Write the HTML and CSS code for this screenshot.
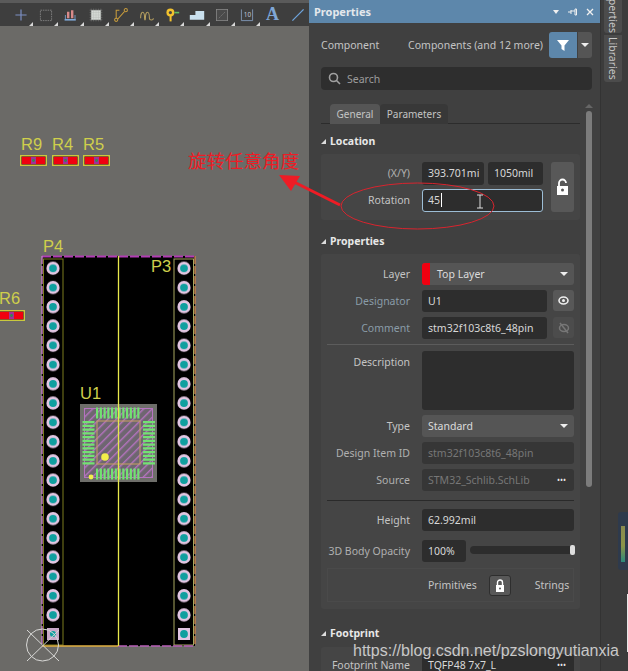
FILE: index.html
```html
<!DOCTYPE html>
<html lang="en">
<head>
    <meta charset="UTF-8">
    <meta name="viewport" content="width=device-width, initial-scale=1.0">
    <title>Properties</title>
    <link rel="stylesheet" href="styles.css">
</head>
<body>
    <div class="app">
        <!-- pcb canvas -->
        <div class="canvas">
            <svg class="board" width="309" height="671" viewBox="0 0 309 671">
                <defs>
                    <g id="pad">
                        <circle r="6.600" fill="#e2c6e2"/>
                        <circle r="3.900" fill="#0f9f9f"/>
                    </g>
                    <!-- pattern width is the distance between the two pin columns -->
                    <pattern id="pads" x="43" y="258.700" width="131" height="19.260" patternUnits="userSpaceOnUse">
                        <use href="#pad" x="10" y="9.600"/>
                    </pattern>
                    <pattern id="hatch" width="6" height="6" patternUnits="userSpaceOnUse" patternTransform="rotate(45)">
                        <rect width="6" height="6" fill="#6e6670"/>
                        <rect width="1.400" height="6" fill="#b673c0"/>
                    </pattern>
                    <g id="res">
                        <rect x="0.700" y="0.700" width="25.600" height="9.600" fill="#5a1020" stroke="#c9c93e" stroke-width="1.400"/>
                        <rect x="2" y="2" width="9" height="7" fill="#f00010"/>
                        <rect x="16" y="2" width="9" height="7" fill="#f00010"/>
                        <rect x="11" y="2" width="5" height="7" fill="#a0309a"/>
                        <circle cx="13.500" cy="5.500" r="1.400" fill="#2f8f4a"/>
                    </g>
                </defs>

                <text class="ref" x="21" y="150">R9</text>
                <text class="ref" x="52" y="150">R4</text>
                <text class="ref" x="83" y="150">R5</text>
                <use href="#res" x="20" y="155"/>
                <use href="#res" x="52" y="155"/>
                <use href="#res" x="83" y="155"/>
                <text class="ref" x="-1" y="304">R6</text>
                <use href="#res" x="-2" y="310"/>

                <text class="ref" x="43" y="252">P4</text>

                <!-- outline -->
                <rect x="42" y="256" width="153" height="390" fill="#000"/>
                <rect x="43.500" y="259" width="19.500" height="386" fill="none" stroke="#7c7c1e"/>
                <rect x="174" y="259" width="19.500" height="386" fill="none" stroke="#a8a860"/>
                <line x1="42" y1="256.500" x2="195" y2="256.500" stroke="#b23db4" stroke-width="2" stroke-dasharray="9 2"/>
                <line x1="42" y1="256" x2="42" y2="646" stroke="#c47cc4" stroke-width="1.400" stroke-dasharray="8 2"/>
                <line x1="195" y1="256" x2="195" y2="646" stroke="#c8824e" stroke-width="1.400" stroke-dasharray="8 2"/>
                <line x1="42" y1="646" x2="118" y2="646" stroke="#e0b040" stroke-width="1.400"/>
                <line x1="118" y1="646" x2="195" y2="646" stroke="#b860b8" stroke-width="1.400" stroke-dasharray="9 2"/>

                <rect x="43" y="259" width="151" height="366" fill="url(#pads)"/>
                <rect x="47" y="628" width="12" height="12" fill="#c8a8c8"/>
                <circle cx="53" cy="634" r="3" fill="#0f9f9f"/>
                <rect x="178" y="628" width="12" height="12" fill="#e2c6e2"/>
                <circle cx="184" cy="634" r="3.900" fill="#0f9f9f"/>

                <text class="ref" x="151" y="272">P3</text>

                <!-- u1 -->
                <text class="ref" x="80" y="399">U1</text>
                <rect x="80" y="404" width="77" height="78" fill="#6e6e6a"/>
                <rect x="84.500" y="408.500" width="68" height="69" fill="url(#hatch)" stroke="#b673c0"/>
                <rect x="97" y="421" width="43" height="43" fill="url(#hatch)" stroke="#c8a060"/>
                <g stroke="#72e272" fill="none">
                    <line x1="96" y1="413" x2="141" y2="413" stroke-width="11" stroke-dasharray="2.200 1.550"/>
                    <line x1="96" y1="474" x2="141" y2="474" stroke-width="11" stroke-dasharray="2.200 1.550"/>
                    <line x1="88.500" y1="421" x2="88.500" y2="466" stroke-width="12" stroke-dasharray="2.200 1.550"/>
                    <line x1="149" y1="421" x2="149" y2="466" stroke-width="12" stroke-dasharray="2.200 1.550"/>
                </g>
                <circle cx="105" cy="457" r="3.800" fill="#f2ee4a"/>
                <circle cx="91" cy="477" r="2.400" fill="#f2ee4a"/>
                <line x1="118.500" y1="256" x2="118.500" y2="646" stroke="#e8e84c" stroke-width="1.300"/>

                <!-- origin -->
                <g fill="none" stroke="#d8d8d6" stroke-width="1">
                    <circle cx="42.500" cy="645" r="16"/>
                    <path d="M27 630l32 31M59 630l-32 31"/>
                </g>
            </svg>

            <div class="toolbar">
                <div class="tool"><svg viewBox="0 0 20 20"><path d="M10 3v14M3 10h14" stroke="#7c8fc4" stroke-width="1.500"/></svg></div>
                <div class="tool"><svg viewBox="0 0 20 20"><rect x="3" y="4" width="14" height="13" fill="none" stroke="#8a8a8a" stroke-dasharray="2 1"/></svg></div>
                <div class="tool"><svg viewBox="0 0 20 20"><path d="M5 6h3v8h-3zM10 4h3v10h-3z" fill="#d98a8a"/><path d="M2 15h14v2h-14z" fill="#7fa8d8"/><path d="M3 10v5M15 10v5" stroke="#7fa8d8"/></svg></div>
                <div class="tool"><svg viewBox="0 0 20 20"><rect x="4" y="4" width="12" height="12" fill="#d8dcd8"/><path d="M4 2v16M7 2v16M10 2v16M13 2v16M16 2v16M2 4h16M2 7h16M2 10h16M2 13h16M2 16h16" stroke="#a8aca8" stroke-width="0.600" opacity="0.700"/></svg></div>
                <div class="tool"><svg viewBox="0 0 20 20" fill="none" stroke="#c89c3c" stroke-width="1.300"><circle cx="4" cy="16" r="2"/><circle cx="16" cy="4" r="2"/><path d="M4 14v-10h4M6 15l8-9"/></svg></div>
                <div class="tool"><svg viewBox="0 0 20 20" fill="none" stroke="#b8a060" stroke-width="1.300"><path d="M2 14c0-10 5-10 5 0c0 3 1 3 1 0c0-10 5-10 5 0c0 3 5 3 5 0"/></svg></div>
                <div class="tool"><svg viewBox="0 0 20 20"><circle cx="8" cy="7" r="5" fill="#f2c22e"/><circle cx="8" cy="7" r="2" fill="#444"/><rect x="7" y="11" width="2.500" height="7" fill="#f2c22e"/><rect x="13" y="6" width="6" height="2" fill="#62c060"/></svg></div>
                <div class="tool"><svg viewBox="0 0 20 20"><path d="M1 16v-6h7v-5h11v11z" fill="#c9e0ee"/></svg></div>
                <div class="tool"><svg viewBox="0 0 20 20"><rect x="3" y="3" width="14" height="14" fill="#4a4a4a" stroke="#888"/><path d="M6 14l8-8" stroke="#777" stroke-dasharray="3 1"/></svg></div>
                <div class="tool"><svg viewBox="0 0 20 20" fill="none" stroke="#8aa4c8"><path d="M3 3v14h14v-14"/><text class="tool-num" x="6" y="13">10</text></svg></div>
                <div class="tool tool-plain"><span class="tool-a">A</span></div>
                <div class="tool tool-plain"><svg viewBox="0 0 20 20"><path d="M3 17l14-14" stroke="#6ea4dc" stroke-width="1.600"/></svg></div>
            </div>
        </div>

        <!-- properties panel -->
        <div class="panel">
            <div class="panel__head">
                <span class="panel__title">Properties</span>
                <span class="panel__icons">
                    <svg width="8" height="8" viewBox="0 0 8 8"><path d="M1 2h6l-3 4z" fill="#f0f0f0"/></svg>
                    <svg width="10" height="8" viewBox="0 0 10 8"><path d="M0 4h3M3 3h4M7 1v6h1.500v-6zM3 2v4" stroke="#f0f0f0" fill="none"/></svg>
                    <svg width="8" height="8" viewBox="0 0 8 8"><path d="M1 1l6 6M7 1l-6 6" stroke="#f0f0f0" stroke-width="1.300"/></svg>
                </span>
            </div>

            <div class="filter">
                <span>Component</span>
                <span class="filter__name">Components (and 12 more)</span>
                <span class="filter__btn"><svg width="14" height="14" viewBox="0 0 14 14"><path d="M1 2h12l-4.500 5.500v5.500l-3-2v-3.500z" fill="#fff"/></svg></span>
                <span class="filter__more"><svg width="8" height="6" viewBox="0 0 8 6"><path d="M0 1h8l-4 4z" fill="#eee"/></svg></span>
            </div>

            <div class="search">
                <svg width="13" height="13" viewBox="0 0 13 13" fill="none" stroke="#a0a0a0" stroke-width="1.600"><circle cx="5.500" cy="5.500" r="4"/><path d="M8.500 8.500l3.500 3.500"/></svg>
                <span>Search</span>
            </div>

            <div class="panel__body">
                <div class="content">
                    <div class="tabs">
                        <span class="tab tab--active">General</span>
                        <span class="tab">Parameters</span>
                    </div>

                    <h3 class="group-title">Location</h3>
                    <div class="group group--location">
                        <div class="location-rows">
                            <div class="row">
                                <label class="lbl lbl--dim">(X/Y)</label>
                                <div class="input input--x">393.701mi</div>
                                <div class="input input--y">1050mil</div>
                            </div>
                            <div class="row">
                                <label class="lbl">Rotation</label>
                                <div class="input input--active">45<i class="caret"></i></div>
                            </div>
                        </div>
                        <div class="btn btn--lock">
                            <svg width="13" height="18" viewBox="0 0 13 18"><path d="M3 8v-3a3.500 3.500 0 0 1 7 0" fill="none" stroke="#fff" stroke-width="1.800"/><path d="M1 8h11v9h-11z" fill="#fff"/><circle cx="6.500" cy="12" r="1.500" fill="#555"/></svg>
                        </div>
                    </div>

                    <h3 class="group-title group-title--props">Properties</h3>
                    <div class="group">
                        <div class="row">
                            <label class="lbl">Layer</label>
                            <div class="select select--layer"><i class="swatch"></i>Top Layer<i class="arrow"></i></div>
                        </div>
                        <div class="row">
                            <label class="lbl lbl--link">Designator</label>
                            <div class="input input--grow">U1</div>
                            <div class="btn btn--eye"><svg width="11" height="9" viewBox="0 0 11 9"><ellipse cx="5.500" cy="4.500" rx="4.500" ry="3.500" fill="none" stroke="#eee" stroke-width="1.600"/><circle cx="5.500" cy="4.500" r="1.500" fill="#eee"/></svg></div>
                        </div>
                        <div class="row">
                            <label class="lbl lbl--link">Comment</label>
                            <div class="input input--grow">stm32f103c8t6_48pin</div>
                            <div class="btn btn--eye btn--off"><svg width="12" height="12" viewBox="0 0 12 12"><ellipse cx="6" cy="6" rx="4.500" ry="3.500" fill="none" stroke="#777" stroke-width="1.500"/><path d="M2 1l8 10" stroke="#777" stroke-width="1.500"/></svg></div>
                        </div>
                        <div class="divider"></div>
                        <div class="row row--desc">
                            <label class="lbl">Description</label>
                            <div class="input input--area"></div>
                        </div>
                        <div class="row">
                            <label class="lbl">Type</label>
                            <div class="select">Standard<i class="arrow"></i></div>
                        </div>
                        <div class="row row--item">
                            <label class="lbl lbl--dim">Design Item ID</label>
                            <div class="input input--grow input--off">stm32f103c8t6_48pin</div>
                        </div>
                        <div class="row">
                            <label class="lbl lbl--dim">Source</label>
                            <div class="input input--grow input--off input--dots">STM32_Schlib.SchLib<b class="dots">•••</b></div>
                        </div>
                        <div class="divider divider--dark"></div>
                        <div class="row">
                            <label class="lbl">Height</label>
                            <div class="input input--grow">62.992mil</div>
                        </div>
                        <div class="row row--opacity">
                            <label class="lbl lbl--dim">3D Body Opacity</label>
                            <div class="input input--pct">100%</div>
                            <div class="slider"><i class="slider__knob"></i></div>
                        </div>
                        <div class="prims">
                            <span>Primitives</span>
                            <div class="btn btn--prim"><svg width="10" height="13" viewBox="0 0 10 13"><path d="M2.500 6v-2.500a2.500 2.500 0 0 1 5 0v2.500" fill="none" stroke="#fff" stroke-width="1.400"/><path d="M1 6h8v7h-8z" fill="#fff"/><circle cx="5" cy="9.500" r="1" fill="#555"/></svg></div>
                            <span>Strings</span>
                        </div>
                    </div>

                    <h3 class="group-title group-title--foot">Footprint</h3>
                    <div class="group group--foot">
                        <div class="row">
                            <label class="lbl">Footprint Name</label>
                            <div class="input input--grow input--dots">TQFP48 7x7_L<b class="dots">•••</b></div>
                        </div>
                    </div>
                </div>
                <div class="scroll">
                    <svg width="8" height="5" viewBox="0 0 8 5"><path d="M0 4l4-4 4 4z" fill="#666"/></svg>
                    <div class="scroll__thumb"></div>
                </div>
            </div>
        </div>

        <!-- docked tabs -->
        <div class="dock">
            <div class="dock__tab dock__tab--cut"><span>Properties</span></div>
            <div class="dock__tab"><span>Libraries</span></div>
            <div class="dock__meter"></div>
            <div class="dock__edge"></div>
        </div>

        <!-- hand drawn notes on top of the screenshot -->
        <svg class="notes" width="628" height="671" viewBox="0 0 628 671">
            <ellipse cx="417.500" cy="206" rx="76.500" ry="23" fill="none" stroke="#d8242e"/>
            <path d="M340 205l-46-23" stroke="#ee1c25" stroke-width="3"/>
            <path d="M279 175l21 1-9 15z" fill="#ee1c25"/>
            <path d="M477 195h6M480 195v13M477 208h6" stroke="#ddd" fill="none"/>
        </svg>
        <div class="note-text">旋转任意角度</div>
        <div class="watermark">https://blog.csdn.net/pzslongyutianxia</div>
    </div>
</body>
</html>
```

FILE: styles.css
```css
* {
    margin: 0;
    box-sizing: border-box;
}

body {
    background: #3c3c3c;
    font-family: "Noto Sans", "Liberation Sans", sans-serif;
    font-size: 10.500px;
    color: #c4c4c4;
}

.app {
    width: 628px;
    height: 671px;
    display: flex;
    position: relative;
    overflow: hidden;
}

/* canvas */
.canvas {
    width: 309px;
    position: relative;
    background: #6b6a67;
    flex-shrink: 0;
}
.board {
    position: absolute;
    top: 0;
    left: 0;
}
.ref {
    font-family: "Liberation Sans", sans-serif;
    font-size: 16.500px;
    fill: #cfcf4c;
}
.toolbar {
    position: relative;
    height: 26px;
    padding-left: 8px;
    background: #3e3e3e;
    border-top: 3px solid #5a5a5a;
    display: flex;
    align-items: center;
}
.tool {
    width: 25.200px;
    height: 23px;
    flex-shrink: 0;
    position: relative;
    display: flex;
    align-items: center;
    justify-content: center;
}
.tool svg {
    width: 16px;
    height: 16px;
}
.tool::after {
    content: "";
    position: absolute;
    right: 0;
    bottom: 0;
    border-style: solid;
    border-width: 0 0 4px 4px;
    border-color: transparent transparent #d8d8d8 transparent;
}
.tool-plain::after {
    display: none;
}
.tool-num {
    font-size: 8px;
    fill: #c0c8d8;
    stroke: none;
}
.tool-a {
    font-family: "Liberation Serif", serif;
    font-size: 18px;
    font-weight: bold;
    color: #7fa6d6;
}

/* panel */
.panel {
    width: 291px;
    flex-shrink: 0;
    background: #404040;
    display: flex;
    flex-direction: column;
}
.panel__head {
    height: 23px;
    padding: 0 6px 0 5px;
    background: #5d87ab;
    display: flex;
    justify-content: space-between;
    align-items: center;
}
.panel__title {
    font-size: 11px;
    font-weight: bold;
    color: #e4e8ec;
}
.panel__icons {
    display: flex;
    gap: 8px;
}
.filter {
    height: 26px;
    margin: 9px 8px 0 12px;
    display: flex;
    align-items: center;
}
.filter__name {
    margin-left: auto;
    margin-right: 6px;
}
.filter__btn {
    width: 28px;
    height: 26px;
    background: #5d87ab;
    border-radius: 3px 0 0 3px;
    display: flex;
    align-items: center;
    justify-content: center;
}
.filter__more {
    width: 14px;
    height: 26px;
    margin-left: 1px;
    background: #555;
    border-radius: 0 3px 3px 0;
    display: flex;
    align-items: center;
    justify-content: center;
}
.search {
    height: 23px;
    margin: 9px 8px 0 12px;
    padding-left: 7px;
    background: #2e2e2e;
    border-radius: 4px;
    display: flex;
    align-items: center;
    gap: 6px;
    color: #9c9c9c;
}
.panel__body {
    flex: 1;
    min-height: 0;
    margin-top: 14px;
    display: flex;
}
.content {
    width: 271px;
    flex-shrink: 0;
    padding-left: 12px;
}
.scroll {
    width: 8px;
    margin-left: 5px;
    display: flex;
    flex-direction: column;
    align-items: center;
}
.scroll__thumb {
    width: 6px;
    height: 376px;
    margin-top: 2px;
    background: #7c7c7c;
    border-radius: 3px;
}

.tabs {
    height: 20px;
    padding-left: 9px;
    border-bottom: 1px solid #2c2c2c;
    display: flex;
}
.tab {
    width: 68px;
    height: 20px;
    background: #383838;
    border-radius: 4px 4px 0 0;
    display: flex;
    align-items: center;
    justify-content: center;
    font-size: 10px;
}
.tab--active {
    width: 50px;
    background: #555;
}

.group-title {
    height: 16px;
    margin-top: 9px;
    padding-left: 9px;
    font-size: 10.500px;
    font-weight: bold;
    line-height: 16px;
    color: #e8e8e8;
    position: relative;
}
.group-title::before {
    content: "";
    position: absolute;
    left: 0;
    top: 6px;
    border-style: solid;
    border-width: 0 0 5px 5px;
    border-color: transparent transparent #ddd transparent;
}
.group-title--props {
    margin-top: 13px;
}
.group-title--foot {
    margin-top: 16px;
}
.group {
    margin-top: 5px;
    padding: 9px 6px 7px 6px;
    background: #454545;
    border-radius: 3px;
}
.group--location {
    height: 66px;
    padding-top: 8px;
    display: flex;
    gap: 8px;
}
.group--foot {
    margin-top: 6px;
    padding-top: 7px;
}
.row {
    display: flex;
    align-items: flex-start;
    gap: 4px;
    margin-bottom: 5px;
}
.lbl {
    width: 83px;
    margin-right: 8px;
    flex-shrink: 0;
    text-align: right;
    line-height: 22px;
    white-space: nowrap;
}
.lbl--dim {
    color: #b0b0b0;
}
.lbl--link {
    color: #8a9ca8;
}
.input {
    height: 22px;
    padding-left: 6px;
    background: #2d2d2d;
    border-radius: 3px;
    line-height: 22px;
    color: #d8d8d8;
    white-space: nowrap;
    overflow: hidden;
}
.location-rows .input {
    height: 23px;
    line-height: 23px;
}
.input--x {
    width: 62px;
}
.input--y {
    width: 55px;
}
.location-rows .input--active {
    width: 121px;
    border: 1px solid #9dbed6;
    line-height: 21px;
    padding-left: 5px;
    position: relative;
}
.caret {
    display: inline-block;
    width: 1px;
    height: 14px;
    margin-left: 1px;
    vertical-align: -3px;
    background: #fff;
}
.input--grow {
    flex: 1;
}
.input--off {
    color: #777;
    background: #363636;
}
.input--dots {
    display: flex;
    justify-content: space-between;
    padding-right: 8px;
}
.dots {
    font-weight: normal;
    font-size: 8px;
    letter-spacing: 0;
    color: #e8e8e8;
}
.input--area {
    flex: 1;
    height: 59px;
}
.input--pct {
    width: 44px;
}
.select {
    flex: 1;
    height: 22px;
    padding: 0 6px;
    background: #555;
    border-radius: 3px;
    line-height: 22px;
    color: #dcdcdc;
    display: flex;
    justify-content: space-between;
    align-items: center;
}
.select--layer {
    padding-left: 0;
    justify-content: flex-start;
    gap: 7px;
}
.swatch {
    width: 8px;
    height: 22px;
    background: #f00010;
    border-radius: 3px 0 0 3px;
}
.arrow {
    margin-left: auto;
    border-style: solid;
    border-width: 4px 4px 0 4px;
    border-color: #eee transparent transparent transparent;
}
.btn {
    flex-shrink: 0;
    background: #585858;
    border-radius: 3px;
    display: flex;
    align-items: center;
    justify-content: center;
}
.btn--lock {
    width: 23px;
    height: 50px;
}
.btn--eye {
    width: 21px;
    height: 21px;
    margin-left: 2px;
}
.btn--off {
    background: #4c4c4c;
}
.btn--prim {
    width: 22px;
    height: 21px;
    border: 1px solid #2e2e2e;
}
.location-rows {
    display: flex;
    flex-direction: column;
}
.location-rows .row {
    margin-bottom: 4px;
}
.divider {
    height: 1px;
    margin: 0 0 6px 0;
    background: #5c5c5c;
}
.divider--dark {
    margin: 9px 0 8px 0;
    background: #2a2a2a;
}
.row--opacity {
    margin-top: 9px;
}
.slider {
    flex: 1;
    height: 8px;
    margin-top: 6px;
    background: #2d2d2d;
    border-radius: 4px;
    position: relative;
}
.slider__knob {
    position: absolute;
    right: -1px;
    top: -1px;
    width: 5px;
    height: 10px;
    background: #e0e0e0;
    border-radius: 2px;
}
.prims {
    height: 34px;
    margin-top: 6px;
    padding-left: 100px;
    border: 1px solid #4a4a4a;
    display: flex;
    align-items: center;
    gap: 12px;
}
.prims span:last-child {
    margin-left: 12px;
}

/* dock on the right */
.dock {
    flex: 1;
    background: #3c3c3c;
    border-left: 1px solid #333;
    padding-left: 3px;
    display: flex;
    flex-direction: column;
    position: relative;
}
.dock__tab {
    width: 18px;
    height: 47px;
    margin-bottom: 2px;
    background: #4c4c4c;
    border-radius: 0 0 3px 3px;
    display: flex;
    align-items: center;
    justify-content: center;
}
.dock__tab span {
    writing-mode: vertical-rl;
    font-size: 10.500px;
    color: #c8c8c8;
}
.dock__tab--cut {
    height: 33px;
    align-items: flex-end;
    overflow: hidden;
}
.dock__meter {
    position: absolute;
    right: 0;
    top: 512px;
    width: 10px;
    height: 58px;
    padding: 14px 3px 8px;
    border-radius: 3px 0 0 3px;
    background: linear-gradient(#8a8a50, #8c9448 55%, #2c8a7c) content-box, #2e3a4c;
}
.dock__edge {
    position: absolute;
    right: 0;
    top: 594px;
    width: 1px;
    height: 58px;
    background: #e8e8e8;
}

/* notes */
.notes {
    position: absolute;
    top: 0;
    left: 0;
}
.note-text {
    position: absolute;
    left: 188px;
    top: 148px;
    font-family: "Noto Sans CJK SC", sans-serif;
    font-size: 18.500px;
    line-height: 24px;
    color: #ee1c25;
    white-space: nowrap;
}
.watermark {
    position: absolute;
    left: 353px;
    top: 641px;
    font-family: "Liberation Sans", sans-serif;
    font-size: 16px;
    line-height: 20px;
    color: #c8c8c8;
    white-space: nowrap;
}
```
